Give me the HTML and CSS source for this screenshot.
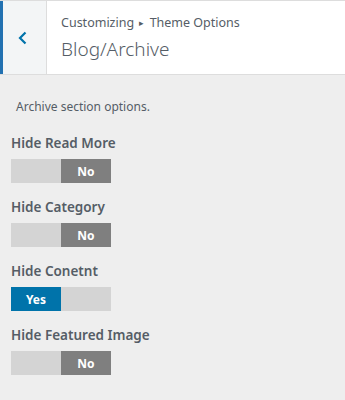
FILE: index.html
```
<!DOCTYPE html>
<html>
<head>
<meta charset="utf-8">
<link rel="stylesheet" href="styles.css">
</head>
<body>
<div class="panel">
  <header class="head">
    <button class="back" aria-label="Back">
      <svg width="12" height="14" viewBox="0 0 12 14"><path d="M8.5 1.5 L3 7 L8.5 12.5" fill="none" stroke="#0073aa" stroke-width="2.2"/></svg>
    </button>
    <div class="titles">
      <div class="crumb">Customizing <span class="tri">▸</span> Theme Options</div>
      <div class="title">Blog/Archive</div>
    </div>
  </header>
  <div class="body">
    <p class="desc">Archive section options.</p>
    <div class="opt">
      <div class="label">Hide Read More</div>
      <div class="toggle"><span class="half off"></span><span class="half no">No</span></div>
    </div>
    <div class="opt">
      <div class="label">Hide Category</div>
      <div class="toggle"><span class="half off"></span><span class="half no">No</span></div>
    </div>
    <div class="opt">
      <div class="label">Hide Conetnt</div>
      <div class="toggle"><span class="half yes">Yes</span><span class="half off"></span></div>
    </div>
    <div class="opt">
      <div class="label">Hide Featured Image</div>
      <div class="toggle"><span class="half off"></span><span class="half no">No</span></div>
    </div>
  </div>
</div>
</body>
</html>
```
FILE: styles.css
```
html, body {
  margin: 0;
  padding: 0;
  background: #eeeeee;
  font-family: "Noto Sans", "Open Sans", sans-serif;
  color: #555d66;
}
.panel {
  width: 345px;
  height: 400px;
  background: #eeeeee;
}
.head {
  display: flex;
  height: 73px;
  background: #ffffff;
  border-top: 1px solid #dddddd;
  border-bottom: 1px solid #dddddd;
  box-sizing: content-box;
}
.back {
  box-sizing: content-box;
  width: 43px;
  margin: 0;
  padding: 0;
  background: #f3f5f6;
  border: none;
  border-left: 3px solid #2271b1;
  border-right: 1px solid #dddddd;
  display: flex;
  align-items: center;
  justify-content: center;
}
.back svg { display: block; margin-left: -4px; }
.titles {
  padding: 13px 0 0 14px;
}
.crumb {
  font-size: 12.5px;
  line-height: 18px;
  color: #555d66;
}
.tri {
  font-size: 9px;
  vertical-align: 1px;
  margin: 0 2px;
}
.title {
  font-size: 19px;
  font-weight: 300;
  line-height: 26px;
  margin-top: 4px;
  color: #555d66;
}
.body {
  padding: 23px 0 0 11px;
}
.desc {
  margin: 0 0 0 5px;
  font-size: 12px;
  line-height: 18px;
  color: #555d66;
}
.opt {
  margin-top: 17px;
}
.opt + .opt { margin-top: 14px; }
.label {
  font-size: 13.5px;
  font-weight: 600;
  line-height: 20px;
  color: #555d66;
  margin-bottom: 6px;
}
.toggle {
  display: flex;
  width: 100px;
  height: 24px;
}
.half {
  width: 50px;
  height: 24px;
  display: flex;
  align-items: center;
  justify-content: center;
  font-size: 12px;
  font-weight: 700;
  color: #ffffff;
}
.off { background: #d4d4d4; }
.no { background: #7f7f7f; }
.yes { background: #0073aa; }
```
